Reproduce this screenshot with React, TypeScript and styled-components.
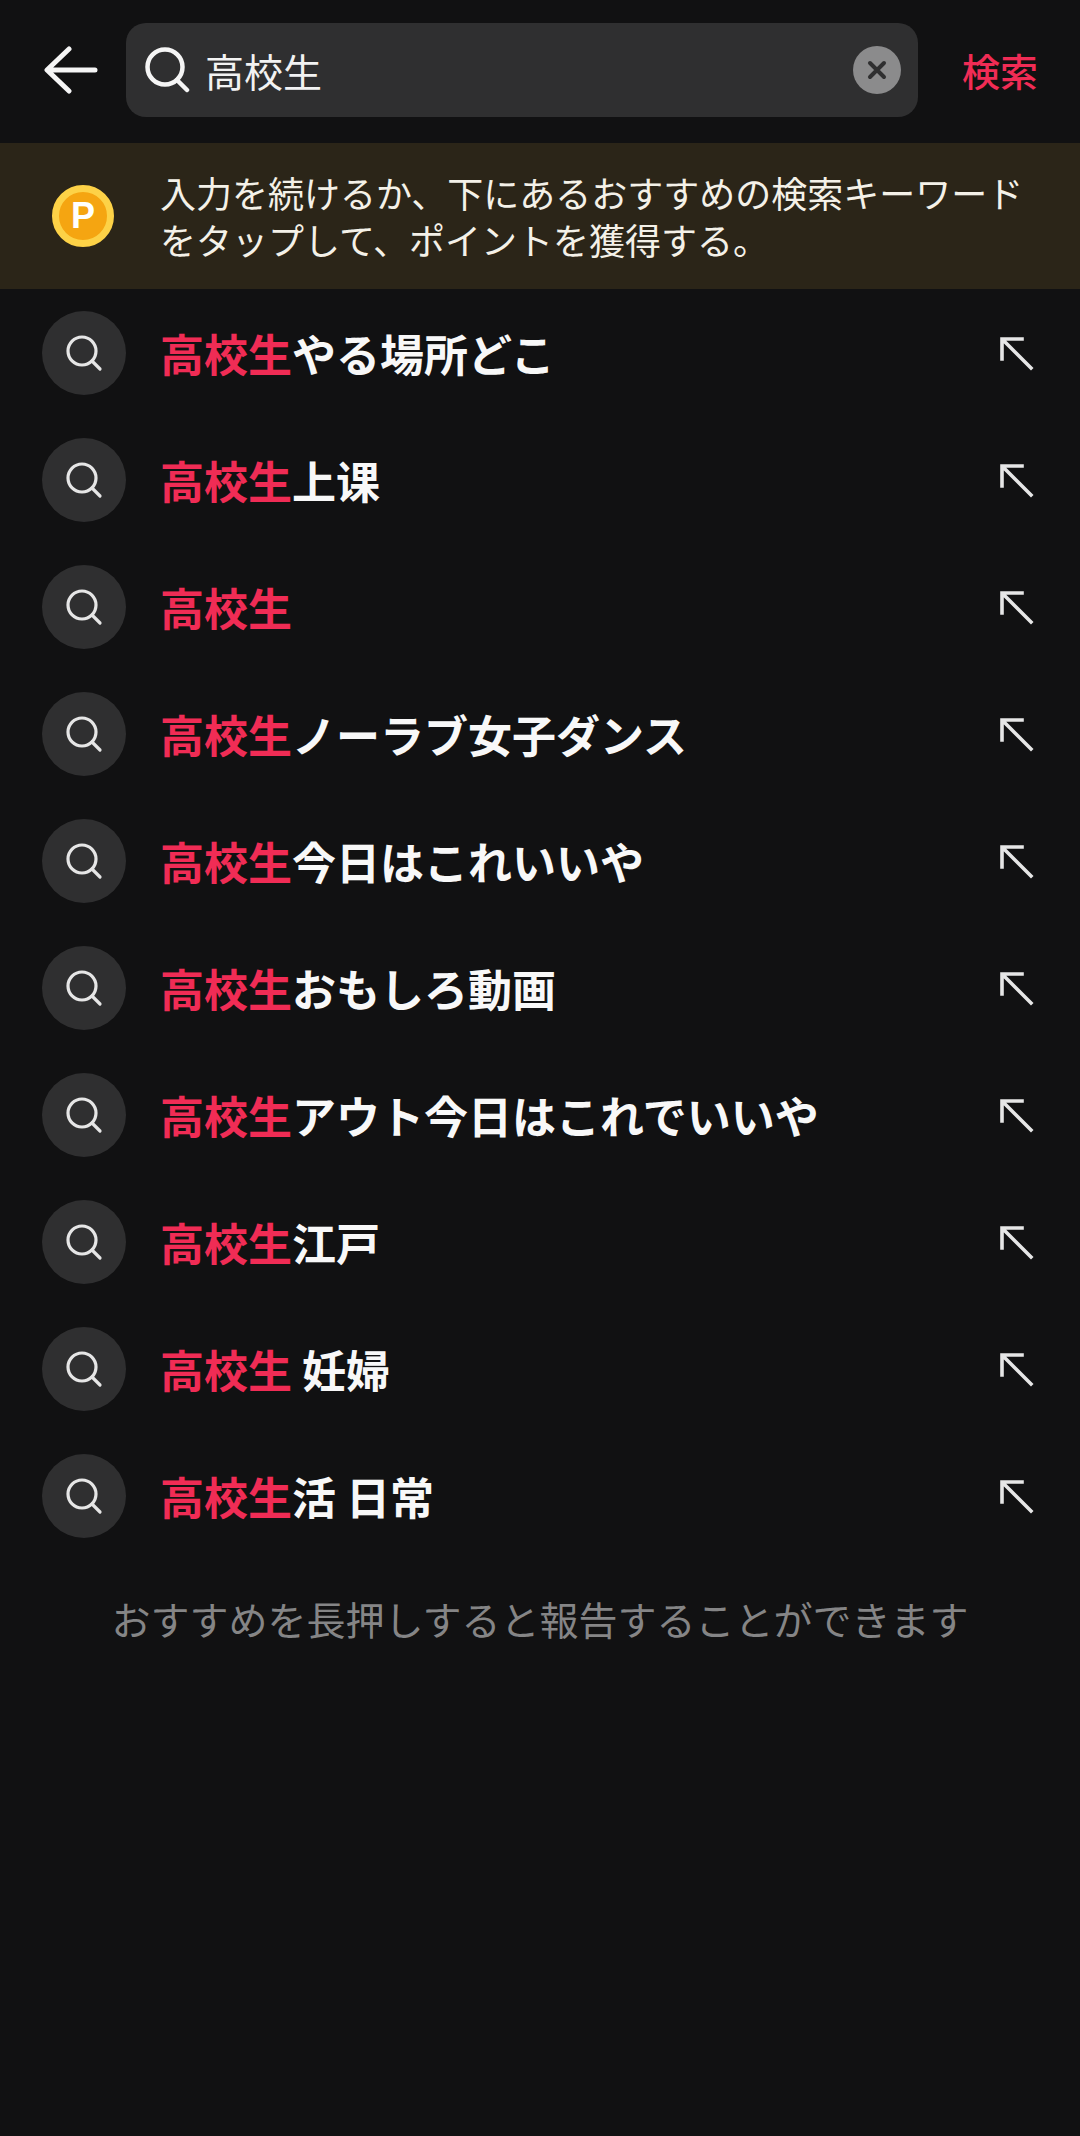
import React from 'react';
import styled, { createGlobalStyle } from 'styled-components';

const GlobalStyle = createGlobalStyle`
  html, body {
    margin: 0;
    padding: 0;
    background-color: #111112;
  }
  body {
    font-family: "Noto Sans CJK JP", "Noto Sans", sans-serif;
  }
`;

const Page = styled.div`
  width: 1080px;
  height: 2136px;
  background-color: #111112;
  overflow: hidden;
`;

const Header = styled.header`
  display: flex;
  align-items: center;
  height: 143px;
  padding: 0 24px 3px 44px;
  box-sizing: border-box;
`;

const BackIcon = styled.svg`
  width: 54px;
  height: 48px;
  flex-shrink: 0;
  margin-right: 28px;
`;

const SearchBox = styled.div`
  flex: 0 0 792px;
  height: 94px;
  display: flex;
  align-items: center;
  padding: 0 17px 0 19px;
  box-sizing: border-box;
  background-color: #2f2f30;
  border-radius: 20px;
`;

const SearchIcon = styled.svg`
  width: 46px;
  height: 46px;
  flex-shrink: 0;
`;

const Query = styled.span`
  flex: 1;
  margin-left: 14px;
  font-size: 39px;
  line-height: 50px;
  color: #f2f2f2;
`;

const ClearButton = styled.span`
  width: 48px;
  height: 48px;
  border-radius: 50%;
  background-color: #8b8b8c;
  display: flex;
  align-items: center;
  justify-content: center;
`;

const SearchAction = styled.span`
  margin-left: 44px;
  font-size: 38px;
  line-height: 50px;
  font-weight: 500;
  color: #f02c55;
  white-space: nowrap;
`;

const Banner = styled.div`
  height: 146px;
  display: flex;
  align-items: center;
  padding: 0 42px 0 52px;
  box-sizing: border-box;
  background-color: #2b2518;
`;

const Coin = styled.span`
  width: 62px;
  height: 62px;
  flex-shrink: 0;
  margin-right: 46px;
  box-sizing: border-box;
  border-radius: 50%;
  background-color: #f5a511;
  border: 7px solid #fdd247;
  display: flex;
  align-items: center;
  justify-content: center;
  font-family: "Liberation Sans", sans-serif;
  font-weight: 700;
  font-size: 36px;
  line-height: 1;
  color: #fff;
`;

const BannerText = styled.p`
  margin: 0;
  font-size: 36px;
  line-height: 47px;
  color: #f4f1e8;
`;

const List = styled.ul`
  list-style: none;
  margin: 0;
  padding: 0;
`;

const Row = styled.li`
  height: 127px;
  display: flex;
  align-items: center;
  padding: 0 44px 0 42px;
`;

const RowBadge = styled.span`
  width: 84px;
  height: 84px;
  border-radius: 50%;
  background-color: #2f2f30;
  flex-shrink: 0;
  margin-right: 34px;
  display: flex;
  align-items: center;
  justify-content: center;
`;

const RowLabel = styled.span`
  flex: 1;
  font-size: 44px;
  line-height: 60px;
  font-weight: 700;
  color: #f8f8f8;
  white-space: pre;
`;

const Match = styled.span`
  color: #f02c55;
`;

const FillIcon = styled.svg`
  width: 40px;
  height: 40px;
  flex-shrink: 0;
`;

const Hint = styled.p`
  margin: 31px 0 0;
  text-align: center;
  font-size: 39px;
  line-height: 56px;
  color: #858586;
`;

const suggestions = [
  'やる場所どこ',
  '上课',
  '',
  'ノーラブ女子ダンス',
  '今日はこれいいや',
  'おもしろ動画',
  'アウト今日はこれでいいや',
  '江戸',
  ' 妊婦',
  '活 日常',
];

const App = () => {
  return (
    <Page>
      <GlobalStyle />
      <Header>
        <BackIcon viewBox="0 0 54 48" fill="none" stroke="#f5f5f5" strokeWidth="5" strokeLinecap="round" strokeLinejoin="round">
          <path d="M51 24H4M25 3L3 24l22 21" />
        </BackIcon>
        <SearchBox>
          <SearchIcon viewBox="0 0 46 46" fill="none" stroke="#f5f5f5" strokeWidth="4.5" strokeLinecap="round">
            <circle cx="20" cy="20" r="17.5" />
            <path d="M32 33l10 10" />
          </SearchIcon>
          <Query>高校生</Query>
          <ClearButton>
            <svg width="20" height="20" viewBox="0 0 20 20" fill="none" stroke="#2f2f30" strokeWidth="4" strokeLinecap="round">
              <path d="M3 3l14 14M17 3L3 17" />
            </svg>
          </ClearButton>
        </SearchBox>
        <SearchAction>検索</SearchAction>
      </Header>
      <Banner>
        <Coin>P</Coin>
        <BannerText>
          入力を続けるか、下にあるおすすめの検索キーワード
          <br />
          をタップして、ポイントを獲得する。
        </BannerText>
      </Banner>
      <List>
        {suggestions.map((rest, index) => (
          <Row key={index}>
            <RowBadge>
              <svg width="40" height="40" viewBox="0 0 40 40" fill="none" stroke="#e6e6e6" strokeWidth="3.2" strokeLinecap="round">
                <circle cx="18" cy="18" r="14" />
                <path d="M28 28l8 8" />
              </svg>
            </RowBadge>
            <RowLabel>
              <Match>高校生</Match>
              {rest}
            </RowLabel>
            <FillIcon viewBox="0 0 40 40" fill="none" stroke="#e6e6e6" strokeWidth="3.6" strokeLinecap="square">
              <path d="M6 26V6h20M7 7l28 28" />
            </FillIcon>
          </Row>
        ))}
      </List>
      <Hint>おすすめを長押しすると報告することができます</Hint>
    </Page>
  );
};

export default App;
